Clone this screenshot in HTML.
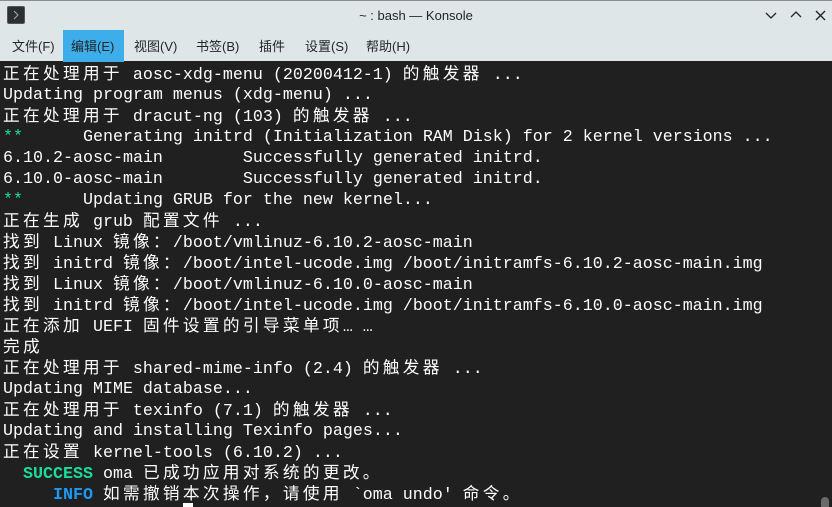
<!DOCTYPE html>
<html><head><meta charset="utf-8"><style>
*{margin:0;padding:0;box-sizing:border-box}
html,body{width:832px;height:507px;overflow:hidden}
body{background:#202020;font-family:"Liberation Sans","Noto Sans CJK SC",sans-serif;position:relative}
#tb{position:absolute;left:0;top:0;width:832px;height:61px;background:#dee6e7;border-top:1px solid #8a8d90}
#icon{position:absolute;left:7px;top:5px;width:18px;height:18px;background:#2b2f31;border-radius:2px;border:1px solid #555}
#title{position:absolute;left:0;width:832px;top:7px;text-align:center;font-size:13px;color:#232629}
.m{position:absolute;top:29px;height:32px;line-height:34px;font-size:13px;color:#232629;padding:0 8px}
#term{position:absolute;left:3px;top:64px;font-family:"Liberation Mono","Noto Sans CJK SC",monospace;font-size:16.67px;color:#fcfcfc}
#term div{height:21px;line-height:21px;white-space:pre}
.c{font-family:"Noto Sans CJK SC",sans-serif;letter-spacing:3.33px;font-weight:normal;line-height:1}
.e{font-family:"Liberation Mono",monospace;letter-spacing:10px;line-height:1}
.g{color:#1cdc9a}
.s{color:#1cdc9a;font-weight:bold}
.i{color:#1d99f3;font-weight:bold}
#cur{position:absolute;left:183px;top:503px;width:10px;height:4px;background:#fcfcfc}
#sb{position:absolute;left:821px;top:497px;width:8px;height:10px;background:#6a6a6a;border-radius:4px 4px 0 0}
</style></head><body>
<div id="tb">
<div id="icon"><svg width="16" height="16" viewBox="0 0 16 16"><path d="M6 4l4 4-4 4" stroke="#aaa" fill="none" stroke-width="1"/></svg></div>
<div id="title">~ : bash — Konsole</div>
<svg style="position:absolute;left:765px;top:9px" width="12" height="10"><path d="M1 3l5 5 5-5" stroke="#232629" fill="none" stroke-width="1.3"/></svg>
<svg style="position:absolute;left:790px;top:9px" width="12" height="10"><path d="M1 7l5-5 5 5" stroke="#232629" fill="none" stroke-width="1.3"/></svg>
<svg style="position:absolute;left:815px;top:9px" width="12" height="12"><path d="M1 1l9 9M10 1l-9 9" stroke="#232629" fill="none" stroke-width="1.4"/></svg>
<div class="m" style="left:4px">文件(F)</div>
<div class="m" style="left:63px;width:61px;background:#3daee9">编辑(E)</div>
<div class="m" style="left:126px">视图(V)</div>
<div class="m" style="left:188px">书签(B)</div>
<div class="m" style="left:251px">插件</div>
<div class="m" style="left:297px">设置(S)</div>
<div class="m" style="left:358px">帮助(H)</div>
</div>
<div id="term"><div><span class="c">正在处理用于</span> aosc-xdg-menu (20200412-1) <span class="c">的触发器</span> ...</div><div>Updating program menus (xdg-menu) ...</div><div><span class="c">正在处理用于</span> dracut-ng (103) <span class="c">的触发器</span> ...</div><div><span class="g">**</span>      Generating initrd (Initialization RAM Disk) for 2 kernel versions ...</div><div>6.10.2-aosc-main        Successfully generated initrd.</div><div>6.10.0-aosc-main        Successfully generated initrd.</div><div><span class="g">**</span>      Updating GRUB for the new kernel...</div><div><span class="c">正在生成</span> grub <span class="c">配置文件</span> ...</div><div><span class="c">找到</span> Linux <span class="c">镜像：</span>/boot/vmlinuz-6.10.2-aosc-main</div><div><span class="c">找到</span> initrd <span class="c">镜像：</span>/boot/intel-ucode.img /boot/initramfs-6.10.2-aosc-main.img</div><div><span class="c">找到</span> Linux <span class="c">镜像：</span>/boot/vmlinuz-6.10.0-aosc-main</div><div><span class="c">找到</span> initrd <span class="c">镜像：</span>/boot/intel-ucode.img /boot/initramfs-6.10.0-aosc-main.img</div><div><span class="c">正在添加</span> UEFI <span class="c">固件设置的引导菜单项</span><span class="e">……</span></div><div><span class="c">完成</span></div><div><span class="c">正在处理用于</span> shared-mime-info (2.4) <span class="c">的触发器</span> ...</div><div>Updating MIME database...</div><div><span class="c">正在处理用于</span> texinfo (7.1) <span class="c">的触发器</span> ...</div><div>Updating and installing Texinfo pages...</div><div><span class="c">正在设置</span> kernel-tools (6.10.2) ...</div><div>  <span class="s">SUCCESS</span> oma <span class="c">已成功应用对系统的更改。</span></div><div>     <span class="i">INFO</span> <span class="c">如需撤销本次操作，请使用</span> `oma undo' <span class="c">命令。</span></div></div>
<div id="cur"></div>
<div id="sb"></div>
</body></html>
